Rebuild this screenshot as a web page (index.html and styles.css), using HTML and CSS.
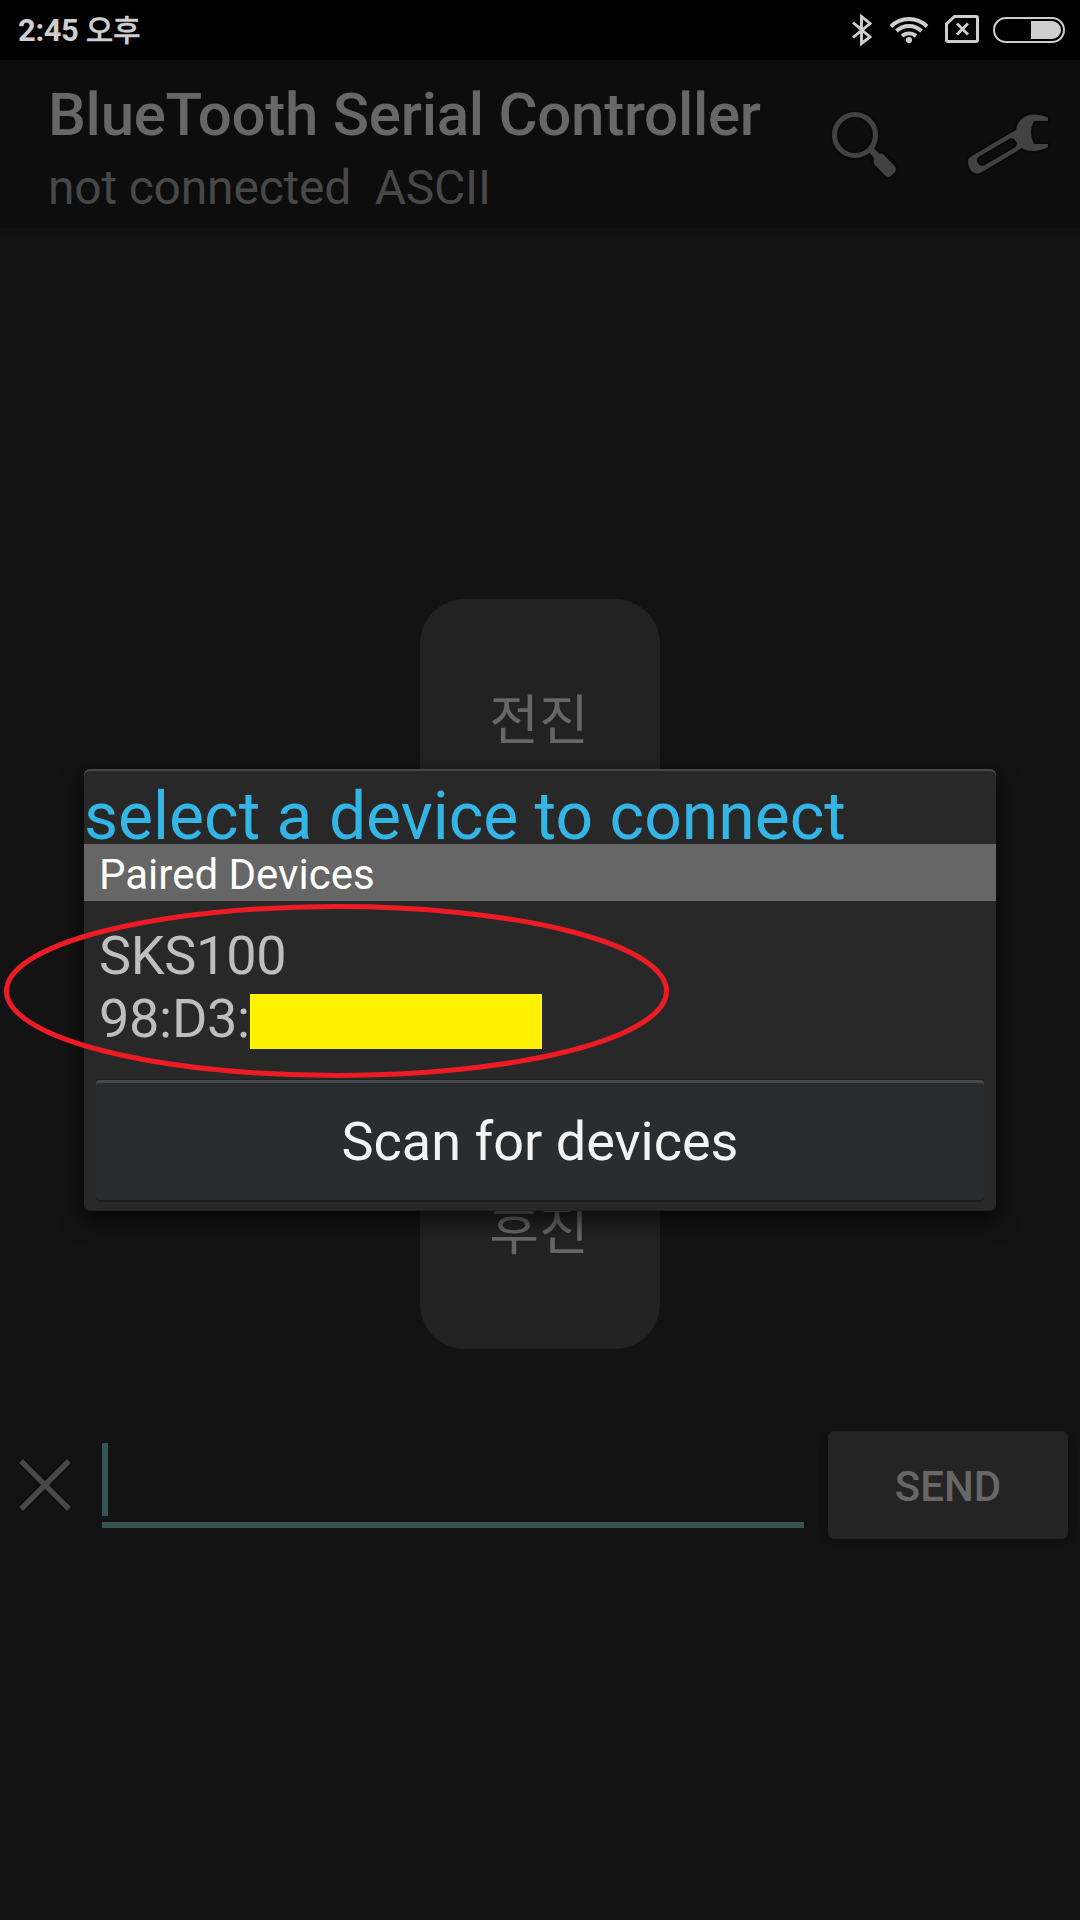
FILE: index.html
```html
<!DOCTYPE html>
<html lang="ko">
<head>
<meta charset="utf-8">
<title>BlueTooth Serial Controller</title>
<link rel="stylesheet" href="styles.css">
</head>
<body>
<div class="screen">
  <header class="status-bar">
    <span class="clock">2:45 <span class="meridiem">오후</span></span>
    <svg class="status-icons" width="216" height="60" viewBox="850 0 216 60" fill="none" stroke="#cecece">
      <path d="M853 22.500 L870 37 L861.500 43.500 V16.500 L870 23.500 L853 37.500" stroke-width="2.900"/>
      <g stroke-width="3.900">
        <path d="M891 26.500 A25.500 25.500 0 0 1 927 26.500"/>
        <path d="M896.500 31 A18 18 0 0 1 921.500 31"/>
        <path d="M902 36 A10.500 10.500 0 0 1 916 36"/>
      </g>
      <circle cx="909" cy="40" r="3.100" fill="#cecece" stroke="none"/>
      <path d="M954.500 16.500 H976 Q977.500 16.500 977.500 18 V40 Q977.500 41.500 976 41.500 H948 Q946.500 41.500 946.500 40 V24 Z" stroke-width="3"/>
      <path d="M957 23.500 L968 34.500 M968 23.500 L957 34.500" stroke-width="2.800"/>
      <rect x="994" y="18" width="70" height="24" rx="12" stroke-width="2"/>
      <path d="M1031 21 H1052 A9 9 0 0 1 1052 39 H1031 Z" fill="#cecece" stroke="none"/>
    </svg>
  </header>

  <div class="action-bar">
    <div class="titles">
      <h1 class="title">BlueTooth Serial Controller</h1>
      <p class="subtitle">not connected&nbsp; ASCII</p>
    </div>
    <svg class="action-icon" width="72" height="72" viewBox="828 108 72 72">
      <g fill="none" stroke="#090909">
        <circle cx="855" cy="135" r="20.500" stroke-width="9"/>
        <path d="M869 149 L879 159" stroke-width="11"/>
        <path d="M880 161 L889 170" stroke-width="20" stroke-linecap="round"/>
      </g>
      <circle cx="855" cy="135" r="20.500" fill="none" stroke="#424242" stroke-width="5.200"/>
      <path d="M868.500 151.500 L873 147.500 L879.500 153.700 Q882 153 884 155 L894.500 166 Q897 169 895 172 L891 176 Q888 178 885 175.500 L874.500 164.500 Q873 162 874 158 Z" fill="#424242"/>
    </svg>
    <svg class="action-icon wrench" width="92" height="72" viewBox="962 108 92 72">
      <path fill="#424242" stroke="#090909" stroke-width="4" paint-order="stroke" fill-rule="evenodd" d="M1048 117.500 V121 H1034 Q1028 132 1034 144 H1048 V147 Q1041 151 1033 151 Q1026 151 1022 148 L981 172.500 Q976 175 972 171.500 Q968 167 968 161 Q968 158.500 971 156.500 L1016 130 Q1018 118 1029 115 Q1038 113 1048 117.500 Z M1010 138.500 L979 156.500 Q975.500 159 977.500 162.500 Q980.500 167.500 984 165.500 L1015 147.500 Q1018 145 1016.500 142 Q1013.500 137 1010 138.500 Z"/>
    </svg>
  </div>

  <main class="pad">
    <button class="tile">전진</button>
    <button class="tile">후진</button>
  </main>

  <div class="send-row">
    <svg class="clear" width="60" height="60" viewBox="0 0 60 60">
      <path d="M8 8 L52 52 M52 8 L8 52" stroke="#0c0c0c" stroke-width="9" stroke-linecap="round"/>
      <path d="M8 8 L52 52 M52 8 L8 52" stroke="#484848" stroke-width="5.500" stroke-linecap="square"/>
    </svg>
    <div class="input"><span class="caret"></span></div>
    <button class="send">SEND</button>
  </div>

  <section class="dialog">
    <h2 class="dialog-title">select a device to connect</h2>
    <div class="section-label">Paired Devices</div>
    <div class="device">
      <div>SKS100</div>
      <div class="address">98:D3:<span class="mask"></span></div>
    </div>
    <button class="scan">Scan for devices</button>
  </section>

  <svg class="highlight" width="666" height="176" viewBox="0 0 666 176">
    <ellipse cx="332.500" cy="88" rx="330" ry="84.500" fill="none" stroke="#ed1c24" stroke-width="5"/>
  </svg>
</div>
</body>
</html>
```
FILE: styles.css
```css
* { box-sizing: border-box; margin: 0; padding: 0; }
body {
  width: 1080px;
  height: 1920px;
  overflow: hidden;
  background: #131313;
  font-family: Roboto, "Noto Sans CJK KR", sans-serif;
}
button { border: 0; font-family: inherit; }
.screen {
  position: relative;
  height: 1920px;
  display: flex;
  flex-direction: column;
}
.status-bar {
  height: 60px;
  padding: 0 14px 0 18px;
  display: flex;
  align-items: center;
  justify-content: space-between;
  background: #000;
  color: #cecece;
}
.clock {
  padding-top: 2px;
  font-size: 31px;
  font-weight: 700;
  line-height: 58px;
  letter-spacing: -0.4px;
  white-space: nowrap;
}
.meridiem { font-size: 30px; font-weight: 500; -webkit-text-stroke: 0.3px; }
.action-bar {
  height: 168px;
  padding: 0 26px 0 48px;
  display: flex;
  align-items: flex-start;
  background: #0d0d0d;
  box-shadow: 0 2px 5px #101010;
}
.titles { flex: 1; padding-top: 19px; white-space: nowrap; }
.title {
  font-size: 60px;
  font-weight: 500;
  line-height: 72px;
  letter-spacing: -0.27px;
  color: #676767;
}
.subtitle {
  margin-top: 1px;
  font-size: 48px;
  line-height: 72px;
  letter-spacing: -0.2px;
  color: #484848;
}
.action-icon { margin-top: 48px; }
.wrench { margin-left: 62px; }
.pad {
  height: 1121px;
  display: flex;
  flex-direction: column;
  align-items: center;
  justify-content: flex-end;
  gap: 270px;
}
.tile {
  width: 240px;
  height: 240px;
  padding: 0 2px 5px 0;
  border-radius: 45px;
  background: #222;
  color: #676767;
  font-size: 54px;
}
.send-row {
  height: 108px;
  margin-top: 82px;
  padding: 0 12px 0 15px;
  display: flex;
  align-items: center;
}
.input {
  width: 702px;
  height: 85px;
  margin: 0 24px 0 27px;
  border-bottom: 6px solid #365452;
}
.caret { display: block; width: 6px; height: 73px; background: #365452; }
.send {
  width: 240px;
  height: 108px;
  padding-top: 2px;
  border-radius: 6px;
  background: #242424;
  box-shadow: 0 4px 8px #0e0e0e;
  color: #676767;
  font-size: 42px;
  font-weight: 500;
}
.dialog {
  position: absolute;
  left: 84px;
  top: 769px;
  width: 912px;
  height: 442px;
  display: flex;
  flex-direction: column;
  border-radius: 6px;
  background: #282828;
  box-shadow: inset 0 2px #484848, inset 0 -1px #202020, 0 8px 20px 3px rgba(0, 0, 0, .6);
}
.dialog-title {
  height: 75px;
  padding-top: 21px;
  font-size: 66px;
  font-weight: 400;
  line-height: 54px;
  color: #33b5e5;
}
.section-label {
  height: 57px;
  padding-left: 15px;
  background: #666;
  color: #fff;
  font-size: 42px;
  line-height: 61px;
}
.device {
  height: 179px;
  padding: 23px 15px 0;
  color: #bebebe;
  font-size: 54px;
  line-height: 63px;
  letter-spacing: -0.3px;
}
.address { display: flex; }
.mask { width: 292px; height: 55px; margin: 7px 0 0; background: #fff200; }
.scan {
  height: 120px;
  margin: 0 12px;
  padding-top: 2px;
  border-radius: 4px;
  background: #292d30;
  box-shadow: inset 0 3px #484b4e, 0 2px #1c1d1e, 0 -1px #202122;
  color: #f3f3f3;
  font-size: 54px;
}
.highlight { position: absolute; left: 4px; top: 903px; }
```
